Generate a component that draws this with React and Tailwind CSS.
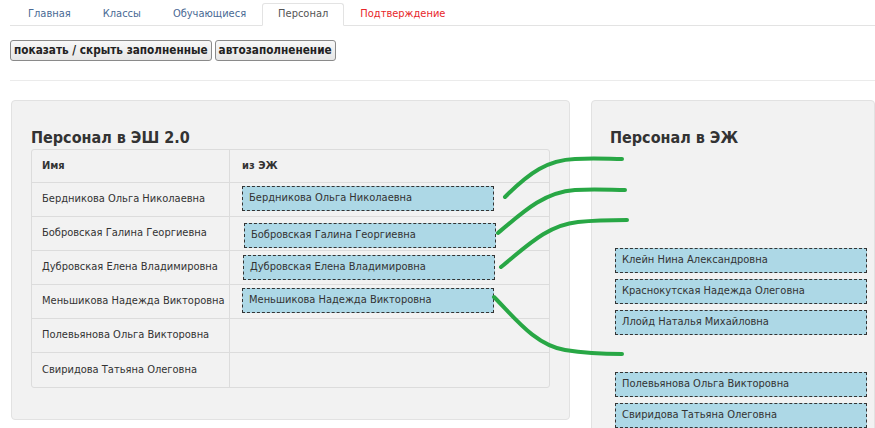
import React from 'react';

const TABS = [
  { label: 'Главная' },
  { label: 'Классы' },
  { label: 'Обучающиеся' },
  { label: 'Персонал', active: true },
  { label: 'Подтверждение', red: true },
];

const ROWS = [
  { name: 'Бердникова Ольга Николаевна', match: 'Бердникова Ольга Николаевна', shift: 'ml-[12px]' },
  { name: 'Бобровская Галина Георгиевна', match: 'Бобровская Галина Георгиевна', shift: 'ml-[14px] mt-[3px]' },
  { name: 'Дубровская Елена Владимировна', match: 'Дубровская Елена Владимировна', shift: 'ml-[13px] mt-[1px]' },
  { name: 'Меньшикова Надежда Викторовна', match: 'Меньшикова Надежда Викторовна', shift: 'ml-[12px]' },
  { name: 'Полевьянова Ольга Викторовна' },
  { name: 'Свиридова Татьяна Олеговна' },
];

const EJ_SLOTS = [
  null,
  null,
  null,
  'Клейн Нина Александровна',
  'Краснокутская Надежда Олеговна',
  'Ллойд Наталья Михайловна',
  null,
  'Полевьянова Ольга Викторовна',
  'Свиридова Татьяна Олеговна',
];

function Chip({ children, className = '' }) {
  return (
    <div
      className={`flex h-[25px] w-[252px] items-center border border-dashed border-[#333] bg-[#add8e6] pl-[6px] text-[11px] text-[#333] ${className}`}
    >
      {children}
    </div>
  );
}

export default function App() {
  return (
    <div className="relative h-[428px] w-[875px] overflow-hidden bg-white font-['DejaVu_Sans_Condensed','DejaVu_Sans',sans-serif] text-[#333]">
      {/* tabs */}
      <div className="ml-[10px] flex h-[26px] items-end border-b border-[#e3e3e3] pl-[2px]">
        {TABS.map((tab) => (
          <div
            key={tab.label}
            className={`mb-[-1px] flex h-[23px] items-center px-[15px] text-[11px] ${
              tab.active
                ? 'rounded-t-[3px] border border-b-white border-[#e3e3e3] bg-white text-[#555]'
                : tab.red
                ? 'border border-transparent text-[#e8262a]'
                : 'border border-transparent text-[#4a6a94]'
            }`}
          >
            {tab.label}
          </div>
        ))}
      </div>

      {/* buttons */}
      <div className="ml-[10px] mt-[14px] flex gap-[3px]">
        <button
          type="button"
          className="h-[21px] rounded-[3px] border border-[#8a8a8a] bg-gradient-to-b from-[#f8f8f8] to-[#e6e6e6] px-[3px] text-[11.7px] font-bold text-[#222]"
        >
          показать / скрыть заполненные
        </button>
        <button
          type="button"
          className="h-[21px] rounded-[3px] border border-[#8a8a8a] bg-gradient-to-b from-[#f8f8f8] to-[#e6e6e6] px-[3px] text-[11.7px] font-bold text-[#222]"
        >
          автозаполненение
        </button>
      </div>

      <div className="ml-[10px] mt-[19px] border-t border-[#ebebeb]" />

      {/* panels */}
      <div className="ml-[11px] mt-[19px] flex gap-[21px]">
        <div className="h-[320px] w-[559px] shrink-0 rounded-[4px] border border-[#e2e2e2] bg-[#f2f2f2] px-[19px] pt-[26px]">
          <h2 className="h-[22px] text-[16px] font-bold leading-[22px] text-[#333]">Персонал в ЭШ 2.0</h2>
          <div className="w-[519px] overflow-hidden rounded-[3px] border border-[#dcdcdc] text-[11px]">
            <div className="flex h-[33px] border-b border-[#dcdcdc]">
              <div className="flex w-[198px] items-center border-r border-[#dcdcdc] pl-[10px] font-bold">Имя</div>
              <div className="flex flex-1 items-center pl-[12px] font-bold">из ЭЖ</div>
            </div>
            {ROWS.map((row, i) => (
              <div
                key={row.name}
                className={`flex h-[34px] ${i < ROWS.length - 1 ? 'border-b border-[#dcdcdc]' : ''}`}
              >
                <div className="flex w-[198px] items-center border-r border-[#dcdcdc] pl-[10px]">{row.name}</div>
                <div className="flex flex-1 items-start pt-[3px]">
                  {row.match && <Chip className={row.shift}>{row.match}</Chip>}
                </div>
              </div>
            ))}
          </div>
        </div>

        <div className="h-[340px] flex-1 rounded-[4px] border border-[#e2e2e2] bg-[#f2f2f2] pl-[18px] pt-[26px]">
          <h2 className="h-[22px] text-[16px] font-bold leading-[22px] text-[#333]">Персонал в ЭЖ</h2>
          <div className="mt-[6px] flex flex-col gap-[6px] pl-[5px]">
            {EJ_SLOTS.map((name, i) =>
              name ? <Chip key={i}>{name}</Chip> : <div key={i} className="h-[25px]" />
            )}
          </div>
        </div>
      </div>

      {/* match connectors */}
      <svg
        className="pointer-events-none absolute left-0 top-0"
        width="875"
        height="428"
        viewBox="0 0 875 428"
        fill="none"
      >
        <g stroke="#28a745" strokeWidth="4" strokeLinecap="round">
          <path d="M505 197 C530 172 548 160 575 159 C595 158 610 159 622 159" />
          <path d="M498 233 C525 210 545 192 575 190 C595 189 612 190 625 190" />
          <path d="M501 267 C528 245 548 225 578 222 C598 220 614 220 627 220" />
          <path d="M494 297 C515 318 535 345 565 350 C590 354 610 354 622 354" />
        </g>
      </svg>
    </div>
  );
}
